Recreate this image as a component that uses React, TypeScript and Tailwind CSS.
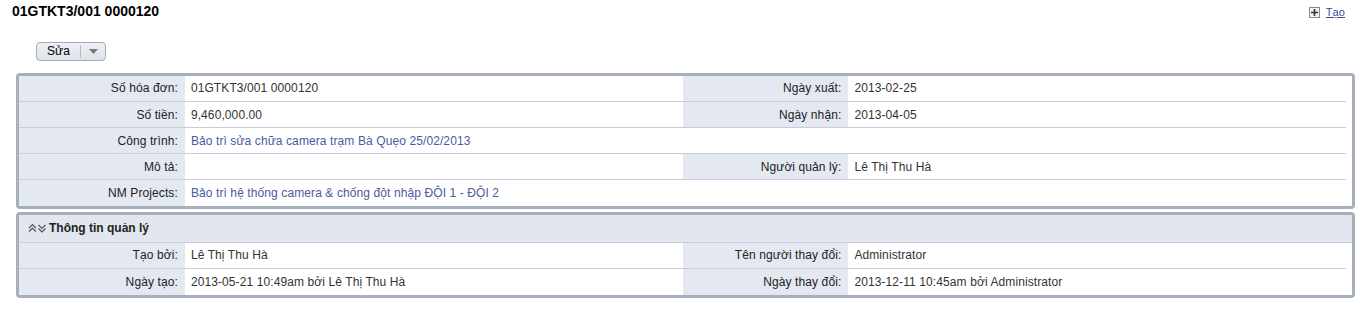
import React from 'react'

type Cell = { label: string; value?: string; link?: boolean }

const mainRows: [Cell, Cell | null][] = [
  [{ label: 'Số hóa đơn:', value: '01GTKT3/001 0000120' }, { label: 'Ngày xuất:', value: '2013-02-25' }],
  [{ label: 'Số tiền:', value: '9,460,000.00' }, { label: 'Ngày nhận:', value: '2013-04-05' }],
  [{ label: 'Công trình:', value: 'Bảo trì sửa chữa camera trạm Bà Quẹo 25/02/2013', link: true }, null],
  [{ label: 'Mô tả:', value: '' }, { label: 'Người quản lý:', value: 'Lê Thị Thu Hà' }],
  [{ label: 'NM Projects:', value: 'Bảo trì hệ thống camera & chống đột nhập ĐỘI 1 - ĐỘI 2', link: true }, null],
]

const adminRows: [Cell, Cell | null][] = [
  [{ label: 'Tạo bởi:', value: 'Lê Thị Thu Hà' }, { label: 'Tên người thay đổi:', value: 'Administrator' }],
  [{ label: 'Ngày tạo:', value: '2013-05-21 10:49am bởi Lê Thị Thu Hà' }, { label: 'Ngày thay đổi:', value: '2013-12-11 10:45am bởi Administrator' }],
]

function Pair({ cell }: { cell: Cell | null }) {
  if (!cell) {
    return (
      <>
        <td className="bg-white" />
        <td className="bg-white" />
      </>
    )
  }
  return (
    <>
      <td className="bg-[#e3e8f1] text-right pr-[7px] text-[#222]">{cell.label}</td>
      <td className={`bg-white pl-[6px] ${cell.link ? 'text-[#4b5aa3]' : 'text-[#333]'}`}>{cell.value}</td>
    </>
  )
}

function Rows({ rows }: { rows: [Cell, Cell | null][] }) {
  return (
    <>
      {rows.map((r, i) => (
        <tr key={i} className={`h-[26px] ${i < rows.length - 1 ? 'border-b border-[#c9cbdc]' : ''}`}>
          <Pair cell={r[0]} />
          <Pair cell={r[1]} />
        </tr>
      ))}
    </>
  )
}

function Cols() {
  return (
    <colgroup>
      <col className="w-[12.5%]" />
      <col className="w-[37.5%]" />
      <col className="w-[12.5%]" />
      <col className="w-[37.5%]" />
    </colgroup>
  )
}

export default function App() {
  return (
    <div className="w-[1366px] h-[310px] bg-white text-[12px] tracking-[0.1px] font-['Liberation_Sans',Arial,sans-serif]">
      {/* Title bar */}
      <div className="flex items-start justify-between pl-[12px] pr-[21px] pt-[3px]">
        <h1 className="text-[14px] font-bold text-black leading-[17px] tracking-normal">01GTKT3/001 0000120</h1>
        <div className="flex items-center gap-[6px] pt-[1px]">
          <span className="w-[11px] h-[11px] border border-[#8a8a8a] bg-[#f2f2f2] flex items-center justify-center">
            <svg width="9" height="9" viewBox="0 0 9 9">
              <path d="M4.5 1v7M1 4.5h7" stroke="#333" strokeWidth="1.6" />
            </svg>
          </span>
          <a className="text-[11px] text-[#3b4a9a] underline">Tạo</a>
        </div>
      </div>

      {/* Action button */}
      <div className="pl-[36px] pt-[21px]">
        <div className="inline-flex h-[19px] items-stretch rounded-[4px] border border-[#a3abb7] bg-gradient-to-b from-[#eef1f5] to-[#dde2ea] text-[12px] text-black">
          <span className="px-[10px] flex items-center">Sửa</span>
          <span className="w-px bg-[#b3bac5] my-[2px]" />
          <span className="w-[24px] flex items-center justify-center">
            <svg width="9" height="5" viewBox="0 0 9 5">
              <path d="M0 0h9L4.5 5z" fill="#777" />
            </svg>
          </span>
        </div>
      </div>

      {/* Main detail panel */}
      <div className="ml-[16px] mr-[11px] mt-[12px] border-[3px] border-[#a5b0bc] rounded-[4px] pr-[6px] bg-white">
        <table className="w-full table-fixed border-collapse">
          <Cols />
          <tbody>
            <Rows rows={mainRows} />
          </tbody>
        </table>
      </div>

      {/* Admin panel */}
      <div className="ml-[16px] mr-[11px] mt-[3px] border-[3px] border-[#a5b0bc] rounded-[4px] bg-[#e2e6ee]">
        <div className="h-[28px] flex items-center gap-[2px] pl-[9px] border-b border-[#c9cbdc]">
          <svg width="19" height="11" viewBox="0 0 19 11" fill="none" stroke="#555" strokeWidth="1.2">
            <path d="M1 5l3.5-3.5L8 5M1 8.5L4.5 5 8 8.5" />
            <path d="M10.5 2l3.5 3.5L17.5 2M10.5 5.5L14 9l3.5-3.5" />
          </svg>
          <span className="font-bold text-[#222] text-[12px] tracking-normal">Thông tin quản lý</span>
        </div>
        <div className="pr-[6px] bg-white">
          <table className="w-full table-fixed border-collapse">
            <Cols />
            <tbody>
              <Rows rows={adminRows} />
            </tbody>
          </table>
        </div>
      </div>
    </div>
  )
}
